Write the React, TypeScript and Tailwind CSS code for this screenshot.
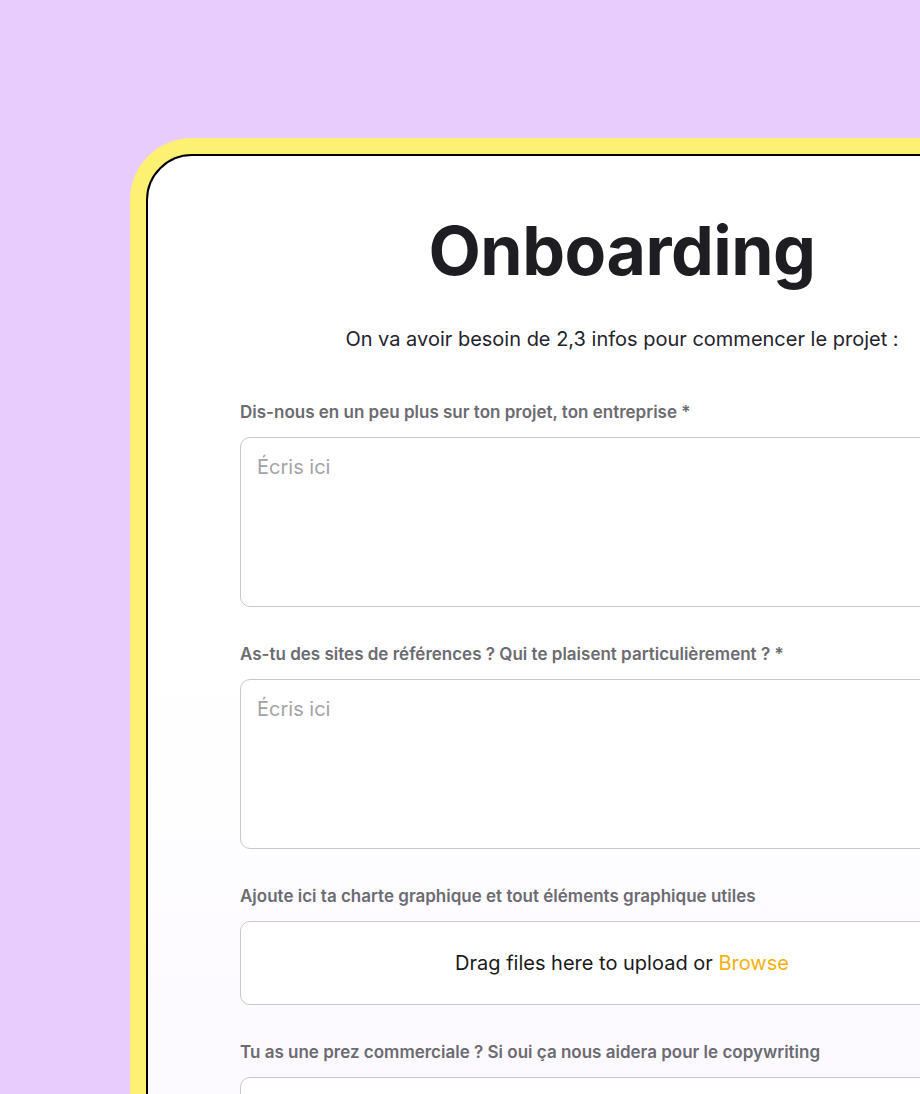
function Field({ label, children }: { label: string; children: React.ReactNode }) {
  return (
    <div className="flex flex-col gap-[15px]">
      <label className="text-[17px] leading-5 font-semibold text-[#6b6b72]">{label}</label>
      {children}
    </div>
  );
}

function TextArea() {
  return (
    <textarea
      placeholder="Écris ici"
      className="h-[170px] w-full resize-none rounded-[10px] border-[1.5px] border-[#c9c8cd] bg-white px-4 py-[15px] text-[20px] leading-7 text-[#222] placeholder:text-[#a3a3a8] outline-none"
    />
  );
}

export default function App() {
  return (
    <div
      className="h-[1094px] w-[920px] overflow-hidden bg-[#e8ccfe] pl-[130px] pt-[138px]"
      style={{ fontFamily: "Inter, 'Noto Sans', sans-serif" }}
    >
      <div className="w-[968px] rounded-tl-[62px] bg-[#fdf174] pl-4 pt-4">
        <div className="min-h-[1000px] rounded-tl-[46px] border-2 border-black bg-gradient-to-b from-white via-white to-[#fbf8ff] px-[92px] pt-[58px]">
          <h1 className="text-center text-[68px] leading-[72px] font-bold tracking-[-0.5px] text-[#1e1d22]">
            Onboarding
          </h1>
          <p className="mt-[39px] text-center text-[20px] leading-7 text-[#24232c]">
            On va avoir besoin de 2,3 infos pour commencer le projet :
          </p>

          <div className="mt-[49px] flex flex-col gap-[37px]">
            <Field label="Dis-nous en un peu plus sur ton projet, ton entreprise *">
              <TextArea />
            </Field>
            <Field label="As-tu des sites de références ? Qui te plaisent particulièrement ? *">
              <TextArea />
            </Field>
            <Field label="Ajoute ici ta charte graphique et tout éléments graphique utiles">
              <div className="flex h-[84px] items-center justify-center rounded-[10px] border-[1.5px] border-[#c9c8cd] bg-white text-[20px] text-[#1a1a1a]">
                <span>
                  Drag files here to upload or <span className="text-[#f5b10c]">Browse</span>
                </span>
              </div>
            </Field>
            <Field label="Tu as une prez commerciale ? Si oui ça nous aidera pour le copywriting">
              <div className="flex h-[84px] items-center justify-center rounded-[10px] border-[1.5px] border-[#c9c8cd] bg-white" />
            </Field>
          </div>
        </div>
      </div>
    </div>
  );
}
